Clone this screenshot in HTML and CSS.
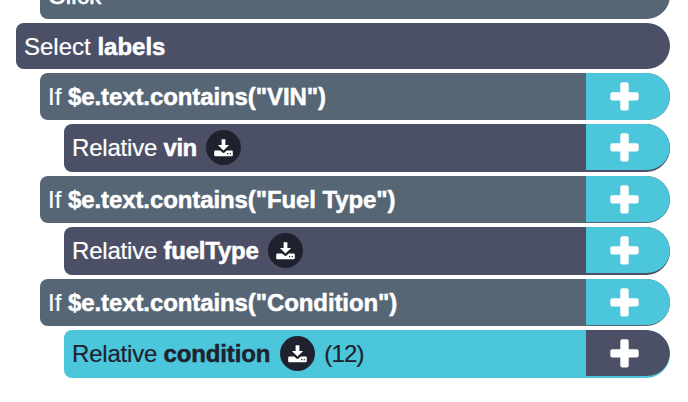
FILE: index.html
```
<!DOCTYPE html>
<html lang="en">
<head>
    <meta charset="UTF-8">
    <title>Steps</title>
    <link rel="stylesheet" href="styles.css">
</head>
<body>
<svg class="defs">
    <symbol id="plus" viewBox="0 0 29 29">
        <path d="M12.3 0.3h4.4q2 0 2 2v8h8q2 0 2 2v4.2q0 2-2 2h-8v8q0 2-2 2h-4.4q-2 0-2-2v-8h-8q-2 0-2-2v-4.2q0-2 2-2h8v-8q0-2 2-2z"/>
    </symbol>
    <symbol id="save" viewBox="0 0 19 18">
        <path d="M7.6 0.2h3.8v5.8h3.7L9.5 11.6 3.9 6h3.7z"/>
        <path fill-rule="evenodd" d="M1.3 11.6h4.9l2.2 2q1.1 .8 2.2 0l2.2-2h4.9q1.1 0 1.1 1.1v3.5q0 1.1-1.1 1.1H1.3q-1.1 0-1.1-1.1v-3.5q0-1.1 1.1-1.1zM13 14v1.3h1.2v-1.3zM15.7 14v1.3h1.2v-1.3z"/>
    </symbol>
</svg>
<ul class="steps">
    <li class="step action"><p class="label click">Click</p></li>
    <li class="step select"><p class="label">Select <b>labels</b></p></li>
    <li class="step action"><p class="label">If <b class="cond">$e.text.contains("VIN")</b></p><div class="add tall"><svg><use href="#plus"/></svg></div></li>
    <li class="step relative"><p class="label"><span class="rel">Relative </span><b class="vin">vin</b><span class="save"><svg><use href="#save"/></svg></span></p><div class="add"><svg><use href="#plus"/></svg></div></li>
    <li class="step action"><p class="label">If <b class="cond">$e.text.contains("Fuel Type")</b></p><div class="add"><svg><use href="#plus"/></svg></div></li>
    <li class="step relative"><p class="label"><span class="rel">Relative </span><b class="fuel">fuelType</b><span class="save"><svg><use href="#save"/></svg></span></p><div class="add"><svg><use href="#plus"/></svg></div></li>
    <li class="step action"><p class="label">If <b class="cond">$e.text.contains("Condition")</b></p><div class="add"><svg><use href="#plus"/></svg></div></li>
    <li class="step relative active"><p class="label"><span class="rel">Relative </span><b class="condition">condition</b><span class="save"><svg><use href="#save"/></svg></span><span class="count">(12)</span></p><div class="add"><svg><use href="#plus"/></svg></div></li>
</ul>
</body>
</html>
```
FILE: styles.css
```
*{
    margin: 0;
    padding: 0;
    list-style: none;
    box-sizing: border-box;
}
body{
    background: #fff;
    color: #fff;
    font: 24px/46px "Liberation Sans", Arial, sans-serif;
    overflow: hidden;
}
b{
    -webkit-text-stroke: 0.5px;
}
.defs{
    display: none;
}
.steps{
    width: 654px;
    margin: -28px 0 0 16px;
    display: flex;
    flex-direction: column;
    gap: 4px;
}
.step{
    height: 47px;
    display: flex;
    justify-content: space-between;
    align-items: flex-start;
    border-radius: 8px 24px 24px 8px;
    overflow: hidden;
}
.action{
    margin-left: 24px;
    background: #566675;
}
.select{
    height: 46px;
    background: #4c5067;
}
.relative{
    height: 48px;
    margin-left: 48px;
    background: #4c5067;
}
.active{
    background: #4bc6da;
    color: #1f222e;
}
.label{
    height: 46px;
    padding: 1px 0 0 8px;
    display: flex;
    white-space: pre;
    -webkit-text-stroke: 0.2px;
}
.click{
    letter-spacing: 0.3px;
    -webkit-text-stroke: 0.6px;
}
.cond{
    letter-spacing: -0.1px;
}
.rel{
    letter-spacing: -0.2px;
}
.vin{
    letter-spacing: -0.5px;
}
.fuel{
    margin-right: 1px;
    letter-spacing: -0.25px;
}
.condition{
    margin-right: 1px;
    letter-spacing: -0.15px;
}
.add{
    width: 84px;
    height: 46px;
    padding-right: 6px;
    display: flex;
    align-items: center;
    justify-content: center;
    border-radius: 0 23px 23px 0;
    background: #4bc6da;
}
.tall{
    height: 47px;
    padding-bottom: 1px;
}
.active .add{
    background: #4c5067;
}
.add svg{
    width: 29px;
    height: 29px;
    margin-right: 1px;
    fill: #fff;
}
.save{
    width: 35px;
    height: 35px;
    margin: 5px 0 0 9px;
    display: flex;
    align-items: center;
    justify-content: center;
    border-radius: 50%;
    background: #1f222e;
}
.save svg{
    width: 19px;
    height: 18px;
    fill: #fff;
}
.count{
    margin-left: 9px;
    letter-spacing: -0.8px;
}
```
